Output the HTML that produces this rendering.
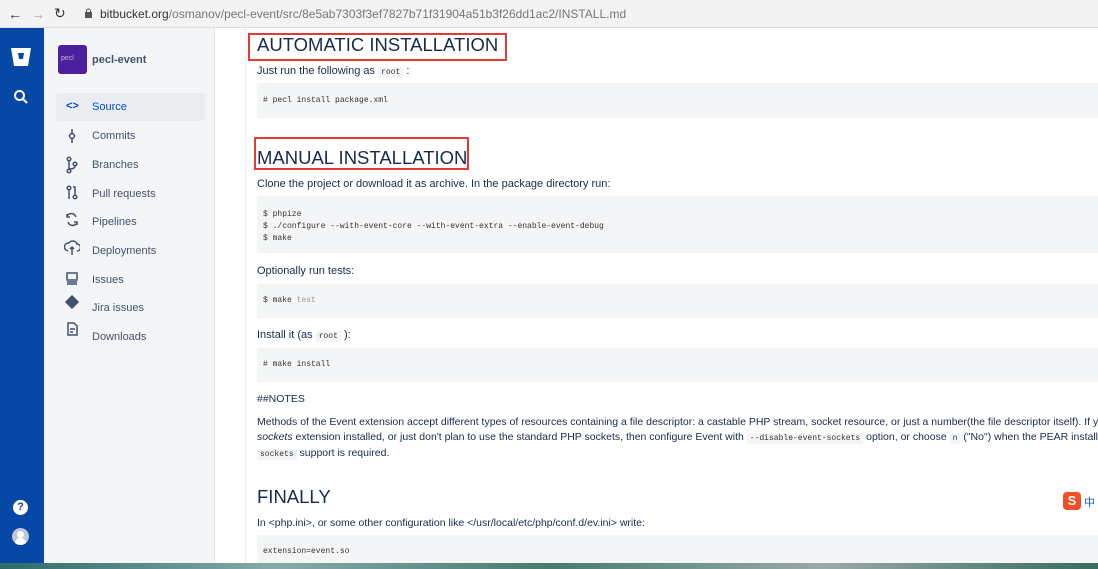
<!DOCTYPE html>
<html><head><meta charset="utf-8"><style>
*{margin:0;padding:0;box-sizing:border-box}
html,body{width:1098px;height:569px;overflow:hidden}
body{background:#fff;font-family:"Liberation Sans",sans-serif;position:relative;color:#172b4d}
.abs{position:absolute}
.bar{left:0;top:0;width:1098px;height:28px;background:#f3f3f3;border-bottom:1px solid #ddd}
.url{left:100px;top:7px;font-size:12px;color:#333}
.url span{color:#777}
.gnav{left:0;top:28px;width:44px;height:535px;background:#0747a6}
.side{left:44px;top:28px;width:171px;height:535px;background:#f4f5f7;border-right:1px solid #e3e5e8}
.item{position:absolute;left:48px;font-size:11px;color:#42526e}
.code{position:absolute;left:257px;width:841px;background:#f4f5f7;font-family:"Liberation Mono",monospace;font-size:8px;color:#333;padding-left:6px}
.t{position:absolute;left:257px;font-size:11px;color:#172b4d}
h1{position:absolute;left:257px;font-weight:400;font-size:18.5px;color:#172b4d}
.red{position:absolute;border:2px solid #e53935}
.ic{font-family:"Liberation Mono",monospace;font-size:8px;background:#f4f5f7;padding:1px 3px;color:#333}
.task{left:0;top:563px;width:1098px;height:6px;background:linear-gradient(90deg,#2e6a6a,#8aa,#4a7a70,#9aa,#3a6a60)}
.clip{position:absolute;left:257px;width:841px;overflow:hidden}
</style></head><body>
<div class="abs bar"></div>
<div class="abs" style="left:8px;top:6px;font-size:14px;color:#333">←</div>
<div class="abs" style="left:31px;top:6px;font-size:14px;color:#aaa">→</div>
<div class="abs" style="left:54px;top:5px;font-size:14px;color:#333">↻</div>
<svg class="abs" style="left:84px;top:8px" width="9" height="11"><rect x="1" y="4" width="7" height="6" fill="#555"/><path d="M2.5 4V3a2 2 0 0 1 4 0v1" stroke="#555" fill="none"/></svg>
<div class="abs url">bitbucket.org<span>/osmanov/pecl-event/src/8e5ab7303f3ef7827b71f31904a51b3f26dd1ac2/INSTALL.md</span></div>

<div class="abs gnav"></div>
<svg class="abs" style="left:10px;top:47px" width="22" height="20"><path d="M1 1h20l-3 18H4z" fill="#fff"/><path d="M8 6h6l-1 6H9z" fill="#0747a6"/></svg>
<svg class="abs" style="left:13px;top:89px" width="16" height="16"><circle cx="6.5" cy="6.5" r="4.5" stroke="#fff" stroke-width="2" fill="none"/><path d="M10 10l4 4" stroke="#fff" stroke-width="2"/></svg>
<div class="abs" style="left:13px;top:500px;width:15px;height:15px;border-radius:50%;background:#fff;color:#0747a6;font-size:11px;font-weight:bold;text-align:center;line-height:15px">?</div>
<div class="abs" style="left:12px;top:528px;width:17px;height:17px;border-radius:50%;background:#c1c7d0;overflow:hidden"><div style="position:absolute;left:5px;top:3px;width:7px;height:7px;border-radius:50%;background:#fff"></div><div style="position:absolute;left:3px;top:10px;width:11px;height:8px;border-radius:5px 5px 0 0;background:#fff"></div></div>

<div class="abs side">
<div style="position:absolute;left:14px;top:17px;width:29px;height:29px;background:#4a1fa0;border-radius:3px;color:#cbb;font-size:7px;padding:10px 0 0 3px">pecl</div>
<div style="position:absolute;left:48px;top:26px;font-size:11px;font-weight:bold;color:#42526e">pecl-event</div>
<div style="position:absolute;left:12px;top:65px;width:149px;height:28px;background:#ebecf0;border-radius:3px"></div>
<div class="item" style="top:73px;color:#0052cc">Source</div>
<div class="abs" style="left:22px;top:72px;font-size:11px;color:#0052cc;font-weight:bold">&lt;&gt;</div>
<div class="item" style="top:102px">Commits</div>
<div class="item" style="top:131px">Branches</div>
<div class="item" style="top:160px">Pull requests</div>
<div class="item" style="top:188px">Pipelines</div>
<div class="item" style="top:217px">Deployments</div>
<div class="item" style="top:246px">Issues</div>
<div class="item" style="top:274px">Jira issues</div>
<div class="item" style="top:303px">Downloads</div>
<svg style="position:absolute;left:20px;top:100px" width="16" height="240" stroke="#42526e" stroke-width="1.5" fill="none">
<path d="M8 1v14"/><circle cx="8" cy="8" r="2.5" fill="#f4f5f7"/>
<circle cx="5" cy="31" r="1.8"/><circle cx="5" cy="43" r="1.8"/><circle cx="11" cy="36" r="1.8"/><path d="M5 33v8M11 38q0 3-6 3"/>
<circle cx="5" cy="60" r="1.8"/><path d="M5 62v9M9 59h2v8"/><circle cx="11" cy="69" r="1.8"/>
<path d="M12 89a5 5 0 0 0-9-1M4 94a5 5 0 0 0 9 1M3 86v3h3M13 97v-3h-3"/>
<path d="M4 123a4 4 0 0 1 1-8 4.5 4.5 0 0 1 8 1 3 3 0 0 1 0 7M8 119v8M6 121l2-2 2 2"/>
<rect x="3" y="145" width="10" height="7"/><path d="M3 154h10M3 156h10"/>
<path d="M8 168l6 6-6 6-6-6z" fill="#42526e"/>
<path d="M4 195h6l3 3v9H4z"/><path d="M6 201h5M6 204h3"/>
</svg>
</div>

<div class="abs" style="left:245px;top:28px;width:1px;height:535px;background:#eee"></div>

<h1 style="top:34px">AUTOMATIC INSTALLATION</h1>
<div class="red" style="left:248px;top:33px;width:259px;height:28px"></div>
<div class="t" style="top:65px">Just run the following as <span class="ic">root</span> :</div>
<div class="code" style="top:83px;height:35px;line-height:35px"># pecl install package.xml</div>

<h1 style="top:147px">MANUAL INSTALLATION</h1>
<div class="red" style="left:254px;top:137px;width:215px;height:33px"></div>
<div class="t" style="top:178px">Clone the project or download it as archive. In the package directory run:</div>
<div class="code" style="top:196px;height:57px;padding-top:13px;line-height:12px">$ phpize<br>$ ./configure --with-event-core --with-event-extra --enable-event-debug<br>$ make</div>
<div class="t" style="top:265px">Optionally run tests:</div>
<div class="code" style="top:284px;height:34px;line-height:34px">$ make <span style="color:#999">test</span></div>
<div class="t" style="top:329px">Install it (as <span class="ic">root</span> ):</div>
<div class="code" style="top:348px;height:34px;line-height:34px"># make install</div>
<div class="t" style="top:393px;font-size:10.5px">##NOTES</div>
<div class="clip" style="top:415px;height:50px;font-size:10.5px;line-height:14.5px;white-space:nowrap">Methods of the Event extension accept different types of resources containing a file descriptor: a castable PHP stream, socket resource, or just a number(the file descriptor itself). If you don't<br><i>sockets</i> extension installed, or just don't plan to use the standard PHP sockets, then configure Event with <span class="ic">--disable-event-sockets</span> option, or choose <span class="ic">n</span> ("No") when the PEAR installer asks whe<br><span class="ic">sockets</span> support is required.</div>
<h1 style="top:486px">FINALLY</h1>
<div class="t" style="top:517px;font-size:10.5px">In &lt;php.ini&gt;, or some other configuration like &lt;/usr/local/etc/php/conf.d/ev.ini&gt; write:</div>
<div class="code" style="top:535px;height:28px;line-height:34px">extension=event.so</div>
<div class="abs" style="left:1063px;top:492px;width:18px;height:18px;background:#f04e23;border-radius:4px;color:#fff;font-weight:bold;font-size:13px;text-align:center;line-height:18px">S</div>
<div class="abs" style="left:1084px;top:494px;font-size:11px;color:#1a5fb4;font-family:'Noto Sans CJK SC',sans-serif">中</div>
<div class="abs task"></div>
</body></html>
